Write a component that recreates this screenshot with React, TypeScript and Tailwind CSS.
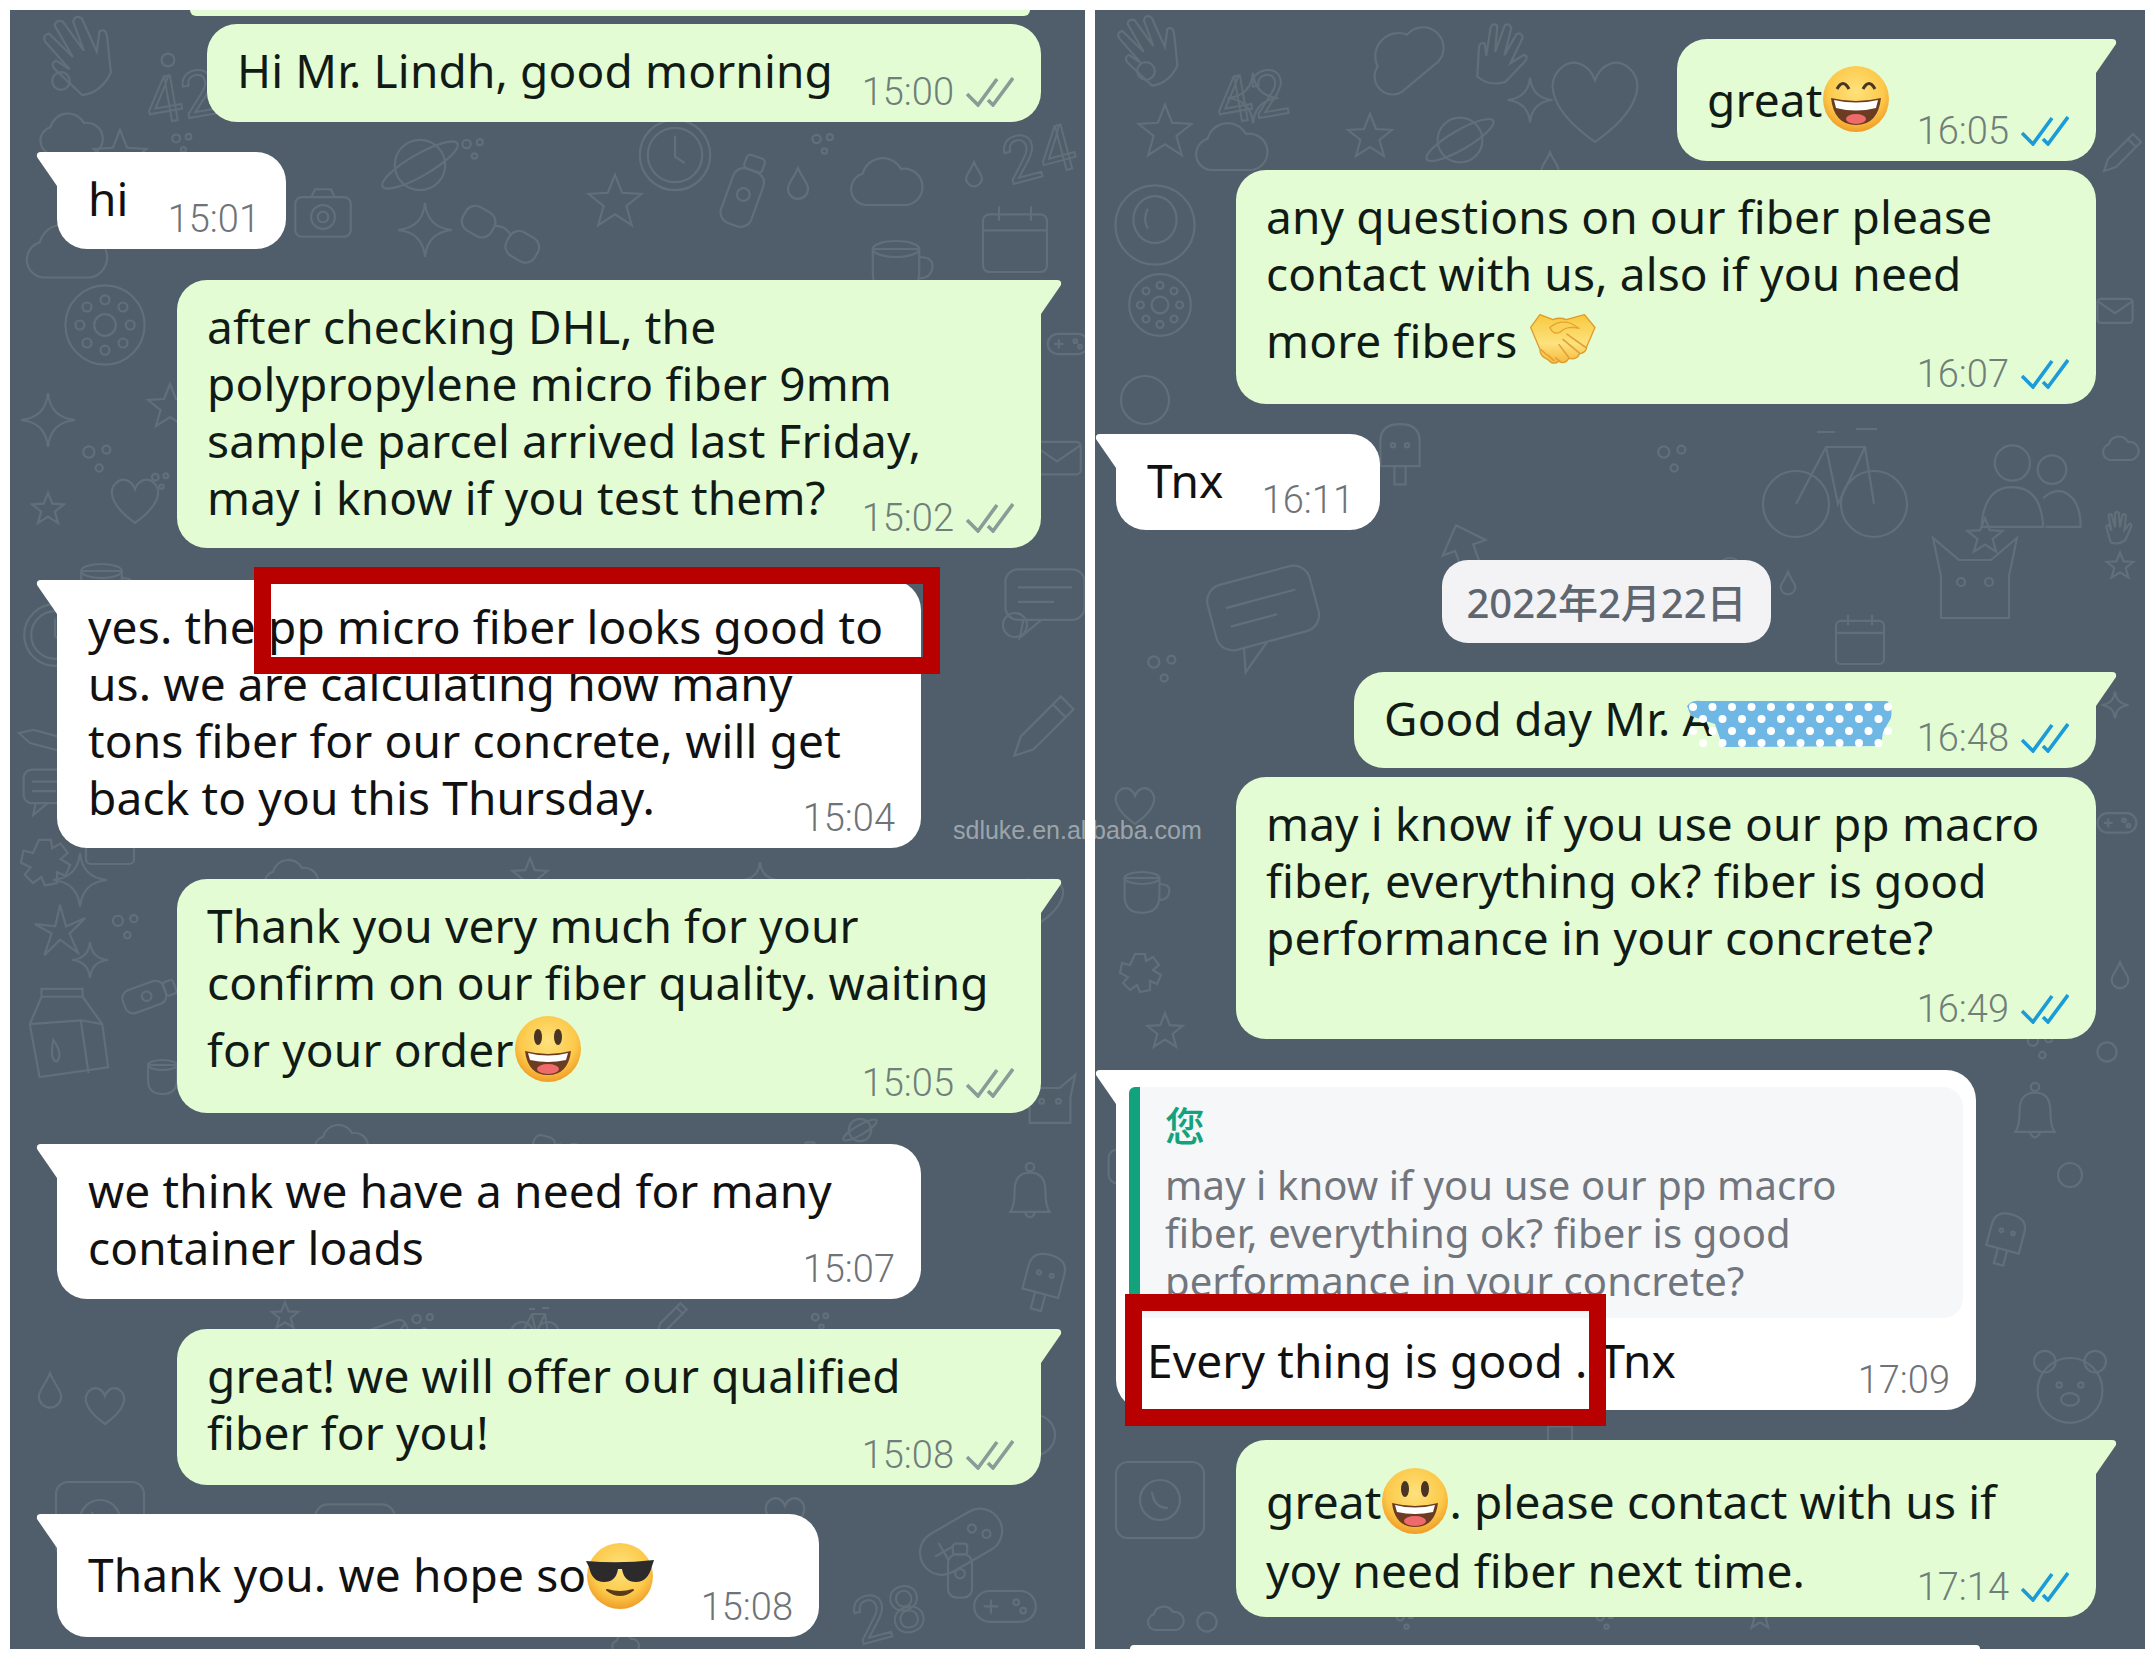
import React from "react";

function Checks({ read }: { read?: boolean }) {
  return (
    <svg width="48" height="30" viewBox="0 0 48 30" fill="none" stroke={read ? "#1b9bd8" : "#8b9b98"} strokeWidth="3.6">
      <path d="M1 17 L12 28 L31 2" />
      <path d="M22 23 L27 28 L47 1" />
    </svg>
  );
}

function Meta({ time, check, read }: { time: string; check?: boolean; read?: boolean }) {
  return (
    <div className={`flex items-center gap-[12px] shrink-0 font-['Roboto',sans-serif] font-light tracking-normal text-[38px] leading-[40px] pb-[10px] ${check ? "text-[#6f7f79]" : "text-[#6f7378]"}`}>
      <span>{time}</span>
      {check && <Checks read={read} />}
    </div>
  );
}

function TailRight() {
  return (
    <svg className="absolute top-0 right-[-21px]" width="22" height="34" viewBox="0 0 22 34" fill="#e4fcd4">
      <path d="M0 0 H17 Q22 0 21 5 L1 34 H0 Z" />
    </svg>
  );
}

function TailLeft() {
  return (
    <svg className="absolute top-0 left-[-21px]" width="22" height="34" viewBox="0 0 22 34" fill="#ffffff">
      <path d="M22 0 H5 Q0 0 1 5 L21 34 H22 Z" />
    </svg>
  );
}

function FaceDefs({ id }: { id: string }) {
  return (
    <defs>
      <radialGradient id={id} cx="50%" cy="38%" r="65%">
        <stop offset="0%" stopColor="#fee27c" />
        <stop offset="65%" stopColor="#fcc94a" />
        <stop offset="100%" stopColor="#ee9622" />
      </radialGradient>
    </defs>
  );
}

function SmileEmoji() {
  return (
    <svg className="inline-block align-[-16px] mt-[4px]" width="68" height="68" viewBox="0 0 68 68">
      <FaceDefs id="f1" />
      <circle cx="34" cy="34" r="33" fill="url(#f1)" />
      <ellipse cx="24" cy="22" rx="4" ry="8" fill="#4a3524" />
      <ellipse cx="44" cy="22" rx="4" ry="8" fill="#4a3524" />
      <path d="M11 36 Q34 42 57 36 Q54 60 34 60 Q14 60 11 36Z" fill="#6b3b22" />
      <path d="M14 38 Q34 43 54 38 L52 45 Q34 49 16 45Z" fill="#fff" />
      <ellipse cx="34" cy="54" rx="11" ry="5" fill="#ef6a6a" />
    </svg>
  );
}

function GrinEmoji() {
  return (
    <svg className="inline-block align-[-16px] mt-[8px]" width="68" height="68" viewBox="0 0 68 68">
      <FaceDefs id="f2" />
      <circle cx="34" cy="34" r="33" fill="url(#f2)" />
      <path d="M15 24 Q21 13 27 24" fill="none" stroke="#4a3524" strokeWidth="3" />
      <path d="M41 24 Q47 13 53 24" fill="none" stroke="#4a3524" strokeWidth="3" />
      <path d="M9 33 Q34 39 59 33 Q56 60 34 60 Q12 60 9 33Z" fill="#6b3b22" />
      <path d="M12 35 Q34 40 56 35 L54 43 Q34 48 14 43Z" fill="#fff" />
      <ellipse cx="34" cy="54" rx="10" ry="5" fill="#ef6a6a" />
    </svg>
  );
}

function CoolEmoji() {
  return (
    <svg className="inline-block align-[-18px] mt-[10px]" width="68" height="68" viewBox="0 0 68 68">
      <FaceDefs id="f3" />
      <circle cx="34" cy="34" r="33" fill="url(#f3)" />
      <path d="M0 19 Q34 22 68 18 L66 24 Q62 40 50 40 Q38 40 36 27 H32 Q30 40 18 40 Q6 40 3 25Z" fill="#2c2a2a" />
      <path d="M21 48 Q34 58 47 48 Q34 52 21 48Z" fill="#5a3a1c" stroke="#5a3a1c" strokeWidth="2" strokeLinejoin="round" />
    </svg>
  );
}

function HandshakeEmoji() {
  return (
    <svg className="inline-block align-[-9px] mt-[11px]" width="66" height="54" viewBox="0 0 200 160">
      <defs>
        <linearGradient id="hs" x1="0" y1="0" x2="0" y2="1">
          <stop offset="0%" stopColor="#f8c93f" />
          <stop offset="60%" stopColor="#fde27e" />
          <stop offset="100%" stopColor="#f6b93a" />
        </linearGradient>
      </defs>
      <path d="M2 42 L30 3 L70 18 Q90 10 110 18 L165 3 L197 42 L172 100 Q172 118 150 122 Q140 142 118 136 Q105 156 88 144 Q70 158 55 140 Q30 130 30 108 Z" fill="url(#hs)" stroke="#e09a2a" strokeWidth="4" strokeLinejoin="round" />
      <path d="M60 42 Q90 18 125 30 L150 45 L130 42 Q105 42 92 56 Q70 66 60 42Z" fill="#fbd258" stroke="#e6a233" strokeWidth="4" />
      <path d="M112 62 L168 102 M100 78 L150 120 M88 94 L118 134" fill="none" stroke="#e3a136" strokeWidth="5" strokeLinecap="round" />
      <path d="M34 110 L50 124 M54 126 L72 142 M78 134 L92 146" fill="none" stroke="#e3a136" strokeWidth="5" strokeLinecap="round" />
    </svg>
  );
}

function Redaction() {
  const dots: React.ReactNode[] = [];
  for (let r = 0; r < 4; r++) {
    for (let c = 0; c < 11; c++) {
      dots.push(<circle key={`${r}-${c}`} cx={6 + c * 19.5 + (r % 2 ? 10 : 0)} cy={7 + r * 12} r="4" fill="#fff" />);
    }
  }
  return (
    <svg className="absolute left-[4px] top-[13px]" width="205" height="48" viewBox="0 0 205 48">
      <path d="M0 6 Q4 0 14 1 L200 1 Q206 6 204 18 L196 32 L194 46 L36 47 L28 24 L4 16 Z" fill="#6fb8e6" />
      {dots}
    </svg>
  );
}

/* wallpaper doodles, all in a 100x100 box */
const DOODLES: Record<string, React.ReactNode> = {
  planet: (<><circle cx="50" cy="50" r="28" /><ellipse cx="50" cy="50" rx="48" ry="12" transform="rotate(-30 50 50)" /></>),
  star: <path d="M50 8 L62 38 L94 40 L69 60 L78 92 L50 74 L22 92 L31 60 L6 40 L38 38Z" />,
  sparkle: <path d="M50 5 Q54 46 95 50 Q54 54 50 95 Q46 54 5 50 Q46 46 50 5Z" />,
  heart: <path d="M50 88 C10 60 5 35 18 22 C30 10 45 18 50 32 C55 18 70 10 82 22 C95 35 90 60 50 88Z" />,
  drop: <path d="M50 8 C60 35 78 50 78 66 A28 28 0 0 1 22 66 C22 50 40 35 50 8Z" />,
  cloud: <path d="M25 75 A20 20 0 0 1 22 36 A26 26 0 0 1 70 30 A22 22 0 0 1 78 75 Z" />,
  clock: (<><circle cx="50" cy="50" r="44" /><circle cx="50" cy="50" r="34" /><path d="M50 26 V52 L62 60" /></>),
  bottle: (<><rect x="30" y="24" width="40" height="72" rx="14" /><rect x="38" y="6" width="24" height="18" rx="5" /><circle cx="50" cy="56" r="8" /></>),
  camera: (<><rect x="8" y="26" width="84" height="60" rx="10" /><circle cx="50" cy="56" r="18" /><circle cx="50" cy="56" r="8" /><path d="M32 26 L38 14 H62 L68 26" /></>),
  glasses: (<><rect x="4" y="34" width="36" height="30" rx="12" /><rect x="60" y="34" width="36" height="30" rx="12" /><path d="M40 44 Q50 38 60 44" /></>),
  hand: <path d="M30 90 L18 50 Q16 42 24 42 L32 58 L24 18 Q24 10 32 12 L42 48 L42 8 Q46 2 52 8 L56 48 L62 14 Q68 8 72 16 L68 56 L82 38 Q90 38 86 48 L70 84 Q50 98 30 90Z" />,
  bubble: (<><rect x="6" y="16" width="88" height="56" rx="14" /><path d="M26 72 L22 92 L46 72" /><path d="M20 36 H80 M20 52 H60" /></>),
  calendar: (<><rect x="10" y="18" width="80" height="72" rx="8" /><path d="M10 38 H90 M30 8 V26 M70 8 V26" /></>),
  cup: (<><path d="M16 30 H74 V60 Q74 88 45 88 Q16 88 16 60Z" /><path d="M74 40 Q94 40 90 56 Q86 68 72 66" /><ellipse cx="45" cy="30" rx="29" ry="10" /></>),
  ring: <circle cx="50" cy="50" r="40" />,
  dial: (<><circle cx="50" cy="50" r="44" /><circle cx="50" cy="50" r="12" /><circle cx="50" cy="22" r="5" /><circle cx="50" cy="78" r="5" /><circle cx="22" cy="50" r="5" /><circle cx="78" cy="50" r="5" /><circle cx="30" cy="30" r="5" /><circle cx="70" cy="30" r="5" /><circle cx="30" cy="70" r="5" /><circle cx="70" cy="70" r="5" /></>),
  pop: (<><path d="M22 66 V30 Q22 6 50 6 Q78 6 78 30 V66Z" /><path d="M42 66 V92 H58 V66" /><circle cx="40" cy="36" r="3" /><circle cx="60" cy="36" r="3" /></>),
  bike: (<><circle cx="24" cy="66" r="22" /><circle cx="76" cy="66" r="22" /><path d="M24 66 L44 28 H70 L76 66 M44 28 L52 66 L70 28 M38 18 H50 M64 16 H78" /></>),
  people: (<><circle cx="34" cy="30" r="16" /><circle cx="70" cy="36" r="13" /><path d="M6 88 Q8 52 34 52 Q60 52 62 88Z" /><path d="M62 62 Q70 54 80 56 Q96 62 96 88 H64" /></>),
  arrow: <path d="M50 6 L88 46 H66 V94 H34 V46 H12Z" />,
  mail: (<><rect x="6" y="22" width="88" height="60" rx="8" /><path d="M6 28 L50 58 L94 28" /></>),
  milk: (<><path d="M12 40 L24 12 H66 L86 40 L92 84 L22 94Z" /><path d="M12 40 L64 36 L86 40 M64 36 L72 90 M24 12 V4 H66 V12" /><path d="M36 56 Q46 70 40 78 Q32 78 36 56Z" /></>),
  phone: (<><rect x="6" y="12" width="88" height="76" rx="12" /><circle cx="50" cy="50" r="20" /><path d="M42 42 Q44 58 58 58" /></>),
  bear: (<><circle cx="50" cy="56" r="36" /><circle cx="22" cy="24" r="12" /><circle cx="78" cy="24" r="12" /><circle cx="38" cy="50" r="3" /><circle cx="62" cy="50" r="3" /><ellipse cx="50" cy="66" rx="10" ry="7" /></>),
  bell: (<><path d="M22 74 Q28 66 28 44 Q28 18 50 18 Q72 18 72 44 Q72 66 78 74Z" /><circle cx="50" cy="10" r="6" /><path d="M42 74 Q50 90 58 74" /></>),
  helmet: (<><circle cx="50" cy="50" r="44" /><ellipse cx="50" cy="44" rx="24" ry="26" /><path d="M42 32 Q36 44 42 54" /></>),
  dog: (<><path d="M16 88 V46 L8 8 L34 30 H66 L92 8 L84 46 V88Z" /><circle cx="36" cy="52" r="4" /><circle cx="64" cy="52" r="4" /></>),
  pencil: <path d="M18 82 L26 58 L76 8 L92 24 L42 74Z M66 18 L82 34" />,
  game: (<><rect x="6" y="30" width="88" height="44" rx="22" /><path d="M30 42 V62 M20 52 H40" /><circle cx="66" cy="46" r="4" /><circle cx="76" cy="58" r="4" /></>),
  gear: <path d="M40 8 H60 L62 22 L76 14 L88 30 L76 40 L92 50 L84 68 L70 62 L70 80 L50 84 L44 70 L30 80 L16 66 L26 54 L10 46 L14 26 L30 30Z" />,
  pin: (<><path d="M50 8 L60 44 L92 30 L66 56 L80 88 L50 66 L24 92 L36 56 L8 40 L42 44Z" /></>),
  dots: (<><circle cx="22" cy="30" r="14" /><circle cx="66" cy="24" r="10" /><circle cx="48" cy="70" r="9" /></>),
};

type D = [string, number, number, number, number?];

const LEFT: D[] = [
  ["hand", 25, 0, 90, -30], ["ring", 40, 60, 22], ["ring", 150, 42, 16], ["cloud", 25, 92, 70], ["star", 80, 115, 60], ["dots", 160, 120, 28],
  ["planet", 365, 110, 90], ["clock", 625, 105, 80], ["bottle", 695, 140, 80, 20], ["cloud", 835, 135, 80], ["calendar", 965, 190, 80], ["cup", 850, 215, 80], ["dots", 450, 125, 30], ["dots", 800, 120, 30],
  ["camera", 280, 170, 66], ["glasses", 445, 180, 90, 30], ["sparkle", 385, 190, 60], ["star", 575, 160, 60], ["drop", 770, 155, 36], ["drop", 950, 150, 28],
  ["dial", 50, 270, 90], ["cloud", 10, 200, 90], ["sparkle", 8, 380, 60], ["star", 135, 370, 50], ["heart", 95, 460, 60], ["cup", 60, 540, 70], ["dots", 70, 430, 40], ["dots", 140, 460, 24],
  ["game", 1035, 310, 46], ["bubble", 990, 545, 90], ["mail", 1020, 420, 54], ["star", 20, 480, 36],
  ["clock", 10, 590, 70], ["pencil", 5, 700, 60, 60], ["bubble", 10, 750, 60], ["gear", 5, 825, 60], ["sparkle", 40, 840, 60], ["pin", 20, 890, 60], ["sparkle", 60, 930, 40], ["dots", 100, 900, 36],
  ["milk", 8, 975, 98], ["bottle", 110, 955, 60, 70], ["cup", 130, 1040, 50],
  ["ring", 990, 600, 30], ["pencil", 990, 680, 80], ["heart", 1000, 860, 60], ["bell", 985, 1150, 70], ["pop", 1000, 1240, 66, 15], ["drop", 20, 1360, 40],
  ["heart", 70, 1370, 50], ["phone", 40, 1460, 100], ["ring", 120, 1500, 70], ["dog", 1010, 1060, 60], ["game", 900, 1480, 100, -30], ["heart", 750, 1480, 50], ["bubble", 300, 1480, 90],
  ["star", 260, 1290, 30], ["bike", 500, 1290, 50], ["mail", 320, 1300, 90, -20], ["pencil", 640, 1290, 40], ["bottle", 780, 1130, 40], ["cloud", 300, 1105, 60], ["glasses", 520, 1110, 60, 15],
  ["planet", 830, 1100, 40], ["cloud", 250, 840, 60], ["star", 500, 845, 40], ["sparkle", 730, 850, 40], ["calendar", 70, 800, 60],
  ["cloud", 600, 1620, 30], ["bottle", 920, 1530, 60], ["ring", 1000, 1400, 50], ["game", 960, 1560, 70], ["arrow", 860, 1340, 40], ["dots", 400, 1300, 30], ["dots", 800, 1300, 24],
];

const RIGHT: D[] = [
  ["hand", 15, 0, 80, -30], ["ring", 40, 50, 22], ["sparkle", 130, 60, 56], ["star", 40, 90, 60], ["cloud", 95, 100, 80], ["planet", 325, 90, 80], ["star", 250, 100, 50], ["hand", 370, 10, 70, 20], ["sparkle", 410, 65, 50], ["heart", 445, 35, 110], ["cloud", 265, 5, 90, -40], ["drop", 440, 140, 30],
  ["helmet", 15, 170, 90], ["dial", 30, 260, 70], ["ring", 20, 360, 60], ["mail", 135, 415, 90, 10], ["pop", 270, 410, 70], ["bike", 665, 395, 150], ["people", 880, 420, 110], ["arrow", 340, 510, 60, -20], ["star", 870, 505, 40],
  ["bubble", 110, 545, 120, -15], ["dog", 830, 520, 100], ["ring", 620, 545, 30], ["drop", 680, 560, 26], ["calendar", 735, 600, 60], ["dots", 560, 430, 40], ["dots", 50, 640, 40],
  ["phone", 15, 1440, 100], ["star", 1010, 540, 30], ["hand", 1005, 500, 36], ["game", 1000, 790, 44], ["bell", 905, 1070, 70], ["pop", 880, 1200, 60, 15], ["bear", 930, 1330, 90], ["ring", 960, 1150, 30], ["mail", 1000, 280, 40], ["pencil", 1000, 120, 50], ["cloud", 1005, 420, 40],
  ["heart", 15, 770, 50], ["cup", 20, 850, 60], ["star", 50, 1000, 40], ["drop", 1010, 950, 30], ["ring", 1000, 1030, 24], ["sparkle", 1005, 680, 30], ["dots", 930, 1020, 36], ["gear", 20, 940, 50], ["bubble", 10, 1130, 60], ["pin", 20, 1260, 50],
  ["calendar", 450, 1405, 30], ["cloud", 50, 1590, 40], ["star", 650, 1590, 30], ["ring", 100, 1600, 24], ["dots", 300, 1600, 24], ["dots", 500, 1600, 24],
];

function Wallpaper({ items }: { items: D[] }) {
  return (
    <svg className="absolute inset-0 w-full h-full" fill="none" stroke="#616f7b">
      {items.map(([name, x, y, size, rot], i) => (
        <g key={i} transform={`translate(${x} ${y}) rotate(${rot || 0} ${size / 2} ${size / 2}) scale(${size / 100})`}>
          <g style={{ strokeWidth: 220 / size }}>{DOODLES[name]}</g>
        </g>
      ))}
    </svg>
  );
}

function Numerals({ items }: { items: [string, number, number, number][] }) {
  return (
    <svg className="absolute inset-0 w-full h-full" fill="none" stroke="#616f7b" strokeWidth="2">
      {items.map(([t, x, y, rot], i) => (
        <text key={i} x={x} y={y} fontSize="64" fontFamily="Roboto" transform={`rotate(${rot} ${x} ${y})`}>{t}</text>
      ))}
    </svg>
  );
}

function Out({ w, h, mt, children, time, read, tail = true }: any) {
  return (
    <div className={`relative z-10 self-end flex justify-between items-end rounded-[30px] bg-[#e4fcd4] pl-[30px] pr-[27px] pt-[18px] text-[#111b16] ${w} ${h} ${mt} ${tail ? "rounded-tr-none" : ""}`}>
      {tail && <TailRight />}
      <div className="self-start min-w-0 flex-1 whitespace-pre">{children}</div>
      <Meta time={time} check read={read} />
    </div>
  );
}

function In({ w, h, mt, children, time }: any) {
  return (
    <div className={`relative z-10 flex justify-between items-end rounded-[30px] rounded-tl-none bg-white pl-[31px] pr-[26px] pt-[18px] text-[#111] ${w} ${h} ${mt}`}>
      <TailLeft />
      <div className="self-start min-w-0 flex-1 whitespace-pre">{children}</div>
      <Meta time={time} />
    </div>
  );
}

export default function App() {
  return (
    <div className="relative flex gap-[10px] w-[2155px] h-[1659px] bg-white pl-[10px] pt-[10px] text-[46px] leading-[57px] tracking-[0.15px] font-['Noto_Sans','Noto_Sans_CJK_SC',sans-serif]">
      {/* left screenshot */}
      <div className="relative flex flex-col w-[1075px] h-[1639px] pr-[44px] pl-[47px] bg-[#4f5e6a] overflow-hidden">
        <Wallpaper items={LEFT} />
        <Numerals items={[["42", 140, 115, -10], ["24", 1000, 175, -15], ["28", 850, 1635, -15]]} />
        <div className="relative z-10 self-end w-[840px] h-[6px] mr-[11px] bg-[#e4fcd4] rounded-b-[6px]" />
        <Out w="w-[834px]" h="h-[98px]" mt="mt-[8px]" time="15:00" tail={false}>Hi Mr. Lindh, good morning</Out>
        <In w="w-[229px]" h="h-[97px]" mt="mt-[30px]" time="15:01">hi</In>
        <Out w="w-[864px]" h="h-[268px]" mt="mt-[31px]" time="15:02">{"after checking DHL, the\npolypropylene micro fiber 9mm\nsample parcel arrived last Friday,\nmay i know if you test them?"}</Out>
        <In w="w-[864px]" h="h-[268px]" mt="mt-[32px]" time="15:04">{"yes. the pp micro fiber looks good to\nus. we are calculating how many\ntons fiber for our concrete, will get\nback to you this Thursday."}</In>
        <Out w="w-[864px]" h="h-[234px]" mt="mt-[31px]" time="15:05">{"Thank you very much for your\nconfirm on our fiber quality. waiting\nfor your order"}<SmileEmoji /></Out>
        <In w="w-[864px]" h="h-[155px]" mt="mt-[31px]" time="15:07">{"we think we have a need for many\ncontainer loads"}</In>
        <Out w="w-[864px]" h="h-[156px]" mt="mt-[30px]" time="15:08">{"great! we will offer our qualified\nfiber for you!"}</Out>
        <In w="w-[762px]" h="h-[123px]" mt="mt-[29px]" time="15:08">{"Thank you. we hope so"}<CoolEmoji /></In>
      </div>

      {/* right screenshot */}
      <div className="relative flex flex-col w-[1050px] h-[1639px] pr-[49px] pl-[21px] bg-[#4f5e6a] overflow-hidden">
        <Wallpaper items={RIGHT} />
        <Numerals items={[["42", 125, 115, -10]]} />
        <Out w="w-[419px]" h="h-[122px]" mt="mt-[29px]" time="16:05" read>{"great"}<GrinEmoji /></Out>
        <Out w="w-[860px]" h="h-[235px]" mt="mt-[9px]" time="16:07" read tail={false}>{"any questions on our fiber please\ncontact with us, also if you need\nmore fibers "}<HandshakeEmoji /></Out>
        <In w="w-[264px]" h="h-[97px]" mt="mt-[30px]" time="16:11">Tnx</In>
        <div className="relative z-10 self-start ml-[326px] mt-[30px] pt-[3px] flex items-center justify-center w-[329px] h-[83px] rounded-[26px] bg-[#f3f3f5] text-[40px] tracking-normal text-[#5e6670] font-medium">2022年2月22日</div>
        <Out w="w-[742px]" h="h-[97px]" mt="mt-[29px]" time="16:48" read>
          {"Good day Mr. "}
          <span className="relative">A<Redaction /></span>
        </Out>
        <Out w="w-[860px]" h="h-[263px]" mt="mt-[9px]" time="16:49" read tail={false}>{"may i know if you use our pp macro\nfiber, everything ok? fiber is good\nperformance in your concrete?"}</Out>

        <div className="relative z-10 flex flex-col w-[860px] h-[341px] mt-[31px] rounded-[30px] rounded-tl-none bg-white pl-[13px] pr-[13px] pt-[17px]">
          <TailLeft />
          <div className="h-[231px] shrink-0 overflow-hidden rounded-l-[6px] rounded-r-[20px] border-l-[11px] border-[#12a37c] bg-[#f6f7f8] pl-[25px] pt-[14px] text-[40px] leading-[48px] tracking-[0.1px] text-[#71767e] whitespace-pre">
            <div className="h-[60px] text-[40px] leading-[50px] font-medium text-[#12a37c]">您</div>
            {"may i know if you use our pp macro\nfiber, everything ok? fiber is good\nperformance in your concrete?"}
          </div>
          <div className="flex flex-1 justify-between items-end pl-[18px] pr-[13px] pt-[14px] text-[#111]">
            <span className="self-start">Every thing is good . Tnx</span>
            <Meta time="17:09" />
          </div>
        </div>

        <Out w="w-[860px]" h="h-[178px]" mt="mt-[30px]" time="17:14" read>
          <span className="block mt-[5px]">{"great"}<SmileEmoji />{". please contact with us if"}</span>
          <span className="block mt-[7px]">yoy need fiber next time.</span>
        </Out>
        <div className="relative z-10 mt-[28px] ml-[14px] w-[850px] h-[4px] bg-white rounded-t-[4px]" />
      </div>

      {/* red annotation boxes and watermark, on top of everything */}
      <div className="absolute z-20 left-[254px] top-[567px] w-[686px] h-[107px] border-[17px] border-[#b80000]" />
      <div className="absolute z-20 left-[1125px] top-[1294px] w-[481px] h-[132px] border-[17px] border-[#b80000]" />
      <div className="absolute z-20 left-[953px] top-[816px] font-['Liberation_Sans',sans-serif] text-[25px] leading-[28px] tracking-normal text-white/45">sdluke.en.alibaba.com</div>
    </div>
  );
}
